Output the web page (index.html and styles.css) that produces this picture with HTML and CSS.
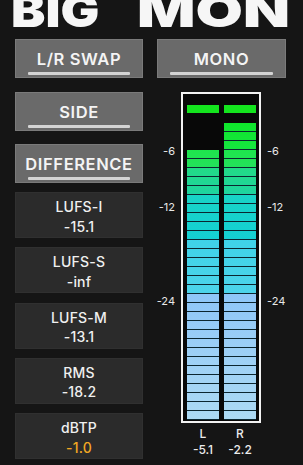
FILE: index.html
```html
<!DOCTYPE html>
<html lang="en">
<head>
  <meta charset="UTF-8" />
  <meta name="viewport" content="width=device-width, initial-scale=1" />
  <title>Big Mono</title>
  <link rel="stylesheet" href="styles.css">
</head>
<body>
  <h1 class="title">
    <span class="title-word title-big">BIG</span>
    <span class="title-word title-mon">MON</span>
  </h1>

  <div class="panel">
    <div class="col col-left">
      <button class="toggle">L/R SWAP</button>
      <button class="toggle">SIDE</button>
      <button class="toggle">DIFFERENCE</button>

      <div class="readouts">
        <div class="readout">
          <span class="readout-label">LUFS-I</span>
          <span class="readout-value">-15.1</span>
        </div>
        <div class="readout">
          <span class="readout-label">LUFS-S</span>
          <span class="readout-value">-inf</span>
        </div>
        <div class="readout">
          <span class="readout-label">LUFS-M</span>
          <span class="readout-value">-13.1</span>
        </div>
        <div class="readout">
          <span class="readout-label">RMS</span>
          <span class="readout-value">-18.2</span>
        </div>
        <div class="readout">
          <span class="readout-label">dBTP</span>
          <span class="readout-value warn">-1.0</span>
        </div>
      </div>
    </div>

    <div class="col col-right">
      <button class="toggle">MONO</button>

      <div class="meter">
        <div class="scale scale-left">
          <span style="top:53px">-6</span>
          <span style="top:109px">-12</span>
          <span style="top:203px">-24</span>
        </div>
        <div class="meter-box">
          <div class="channel">
            <div class="peak"></div>
            <div class="track"><div class="lit" style="height:270px"></div></div>
          </div>
          <div class="channel">
            <div class="peak"></div>
            <div class="track"><div class="lit" style="height:297px"></div></div>
          </div>
        </div>
        <div class="scale scale-right">
          <span style="top:53px">-6</span>
          <span style="top:109px">-12</span>
          <span style="top:203px">-24</span>
        </div>
      </div>

      <div class="meter-labels">
        <div class="meter-label"><span>L</span><span>-5.1</span></div>
        <div class="meter-label"><span>R</span><span>-2.2</span></div>
      </div>
    </div>
  </div>
</body>
</html>
```

FILE: styles.css
```css
body {
  margin: 0;
  background: #151515;
  color: #f0f0f0;
  font-family: 'Inter', 'Liberation Sans', sans-serif;
  overflow: hidden;
}
.title {
  display: flex;
  margin: -13px 0 0;
  padding-left: 11px;
  height: 46px;
  font-size: 46px;
  line-height: 46px;
  font-weight: 900;
  color: #f6f6f6;
  white-space: nowrap;
}
.title-word {
  display: inline-block;
  transform-origin: left center;
}
.title-big {
  width: 126px;
  transform: scaleX(1.12);
}
.title-mon {
  transform: scaleX(1.33);
}
.panel {
  display: grid;
  grid-template-columns: 128px 129px;
  column-gap: 14px;
  padding-left: 15px;
  margin-top: 6px;
}
.col {
  display: flex;
  flex-direction: column;
}
/* toggle buttons */
.toggle {
  height: 39px;
  padding: 7px 0 0;
  margin: 0;
  box-sizing: border-box;
  background: #6a6a6a;
  border: 1px solid #7a7a7a;
  color: #f4f4f4;
  font-family: inherit;
  font-size: 16.5px;
  font-weight: 600;
  letter-spacing: 0.6px;
  line-height: 20px;
  text-align: center;
  cursor: pointer;
}
.toggle::after {
  content: "";
  display: block;
  height: 3px;
  margin: 3px 12px 0;
  background: #d4d4d4;
  border-radius: 1px;
}
.toggle + .toggle {
  margin-top: 13.5px;
}
/* readouts */
.readouts {
  display: flex;
  flex-direction: column;
  gap: 9.25px;
  margin-top: 9px;
}
.readout {
  height: 46px;
  box-sizing: border-box;
  padding-top: 4px;
  background: #2b2b2b;
  border: 1px solid #303030;
  display: flex;
  flex-direction: column;
  align-items: center;
  font-size: 14px;
  font-weight: 500;
  line-height: 19.5px;
  letter-spacing: 0.2px;
}
.warn {
  color: #f2a823;
}
/* meter */
.meter {
  display: flex;
  margin-top: 14px;
}
.scale {
  position: relative;
  font-size: 11px;
  line-height: 13px;
  color: #e8e8e8;
}
.scale span {
  position: absolute;
}
.scale-left {
  width: 24px;
}
.scale-left span {
  right: 6px;
}
.scale-right {
  flex: 1;
}
.scale-right span {
  left: 6px;
}
.meter-box {
  width: 80px;
  height: 331px;
  box-sizing: border-box;
  border: 2px solid #f2f2f2;
  background: #080808;
  padding: 11px 3px 1px 4px;
  display: flex;
  gap: 5px;
}
.channel {
  width: 32px;
  display: flex;
  flex-direction: column;
}
.peak {
  height: 8px;
  margin-bottom: 1px;
  background: #14e41e;
}
.track {
  height: 306px;
  display: flex;
  flex-direction: column;
  justify-content: flex-end;
}
.lit {
  background:
    repeating-linear-gradient(to top, #0b2630 0 1px, transparent 1px 9px),
    linear-gradient(to top,
      #acdaf4 0px, #9ccff6 70px, #8ec6f8 126px,
      #4cd4ea 126px, #3fd2e8 180px,
      #14d0d4 180px, #18d4c6 225px,
      #1ed4a0 225px, #22da86 252px,
      #24e25c 252px, #1ee44c 270px,
      #16e640 270px, #0ce624 306px);
  background-size: 100% 100%, 100% 306px;
  background-position: bottom, bottom;
  background-repeat: no-repeat;
}
.meter-labels {
  display: flex;
  gap: 5px;
  margin: 3px 0 0 30px;
}
.meter-label {
  width: 32px;
  display: flex;
  flex-direction: column;
  align-items: center;
  font-size: 12px;
  font-weight: 500;
  line-height: 16px;
  color: #ececec;
}
```
